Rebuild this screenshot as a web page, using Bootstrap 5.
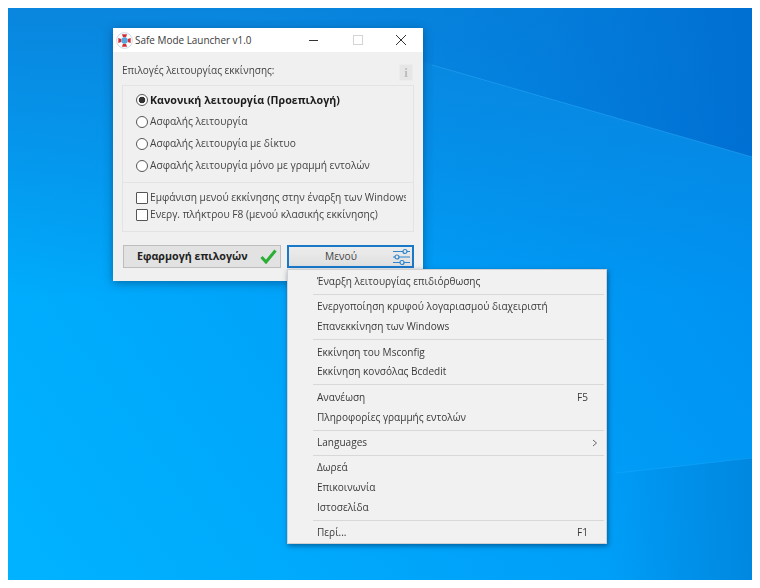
<!DOCTYPE html>
<html lang="el">
<head>
<meta charset="utf-8">
<title>Safe Mode Launcher</title>
<link href="https://cdn.jsdelivr.net/npm/bootstrap@5.3.0/dist/css/bootstrap.min.css" rel="stylesheet">
<style>
html,body{height:100%;background:#fff;margin:0}
body{font-family:"Open Sans","Noto Sans","Liberation Sans",sans-serif;font-size:10px;color:#333;overflow:hidden}
.desk{position:relative;margin:8px 8px 0;width:744px;height:572px;overflow:hidden;background:#0098f4}
.desk svg.wall{position:absolute;inset:0;width:100%;height:100%}
.appwin{position:absolute;left:105px;top:20px;width:310px;height:253px;background:#f0f0f0;box-shadow:0 2px 9px rgba(0,40,80,.45);filter:blur(.3px)}
.tbar{height:24px;background:#fff;color:#3a3a3a;font-size:9.95px;padding-left:3px}
.tbar .ttl{margin-left:2px}
.wbtns{margin-left:auto;width:115px;padding-right:16px}
.appbody{padding:10px 9px 0 9px}
.lbl-top{height:24px;color:#444;line-height:16px}
.infobtn{width:14px;height:17px;background:#e6e6e6;border:1px solid #ececec;color:#bbb;font:bold 13px "Liberation Serif",serif;line-height:15px;text-align:center;margin-top:2px;margin-right:1px}
.optbox{border:1px solid #e3e3e3;margin-top:-1px;height:147px;width:292px}
.optgrp{padding:3px 0 0 13px;height:97px;border-bottom:1px solid #e3e3e3}
.optgrp2{padding:6px 0 0 13px}
.optrow{height:22px;color:#444;white-space:nowrap;font-size:10.2px}
.optrow2{height:17px;color:#444;white-space:nowrap;overflow:hidden;width:270px;font-size:10.2px}
.optrow.on{color:#1c1c1c;font-weight:700;font-size:10.7px}
.optrow .form-check-input,.optrow2 .form-check-input{width:12px;height:12px;margin:0 2px 0 0;flex:none;background-color:#fff;border:1px solid #555;box-shadow:none}
.optrow2 .form-check-input{border-radius:1px}
.optrow .form-check-input:checked{background-color:#fff;border-color:#555;background-image:radial-gradient(circle,#333 0 3px,transparent 3.6px)}
.actrow{margin-top:13px;gap:6px;padding-left:1px}
.apbtn,.mnbtn{height:23px;border-radius:0;font-size:10.2px;padding:0}
.apbtn{width:158px;background:#e2e2e2;border:1px solid #bdbdbd;color:#222;font-weight:700;padding-left:13px;font-size:10.7px;gap:12px}
.mnbtn{width:127px;background:linear-gradient(#ececec,#e0e0e0);border:2px solid #1a78c8;color:#444;padding:0 1px 0 36px}
.apbtn:hover,.mnbtn:hover{background:#e2e2e2;color:#222}
.popmenu{position:absolute;left:279px;top:261px;width:320px;height:275px;background:#f1f1f1;border:1px solid #d0d0d0;box-shadow:1px 2px 5px rgba(0,30,70,.5);padding:2px 2px 2px 25px;margin:0;filter:blur(.3px)}
.popitem{height:19.8px;line-height:19.8px;padding-left:4px;padding-right:16px;color:#3a3a3a;font-size:10.05px}
.popsep{height:5.6px;display:flex;align-items:center}
.popsep::before{content:"";display:block;width:100%;height:1px;background:#d8d8d8}
.chevr{margin-right:-10px}
</style>
</head>
<body>
<div class="desk">
<svg class="wall" viewBox="0 0 744 572" preserveAspectRatio="none" aria-hidden="true">
<defs>
<linearGradient id="b0" x1="0" y1="0.9" x2="1" y2="0.35"><stop offset="0" stop-color="#00b2ff"/><stop offset=".55" stop-color="#00a0f8"/><stop offset="1" stop-color="#0090f0"/></linearGradient>
<linearGradient id="t0" x1="0" y1="0" x2="0" y2="1"><stop offset="0" stop-color="#0a84dc" stop-opacity=".95"/><stop offset="1" stop-color="#0a84dc" stop-opacity="0"/></linearGradient>
<linearGradient id="w1" x1="0" y1="0" x2="1" y2="0"><stop offset="0" stop-color="#0080de" stop-opacity="0"/><stop offset="1" stop-color="#006ed2" stop-opacity=".95"/></linearGradient>
<linearGradient id="w2" x1="0" y1="0" x2="1" y2="0"><stop offset="0" stop-color="#0086de" stop-opacity="0"/><stop offset="1" stop-color="#0086de" stop-opacity=".9"/></linearGradient>
</defs>
<rect width="744" height="572" fill="url(#b0)"/>
<rect width="744" height="290" fill="url(#t0)"/>
<polygon points="240,0 744,0 744,149 424,57" fill="url(#w1)"/>
<line x1="424" y1="57" x2="744" y2="149" stroke="#2aa6f6" stroke-opacity=".55"/>
<polygon points="600,467 744,450 744,572 600,572" fill="url(#w2)"/>
<line x1="608" y1="465" x2="744" y2="450" stroke="#28b0fb" stroke-opacity=".3"/>
</svg>

<div class="appwin">
 <div class="tbar d-flex align-items-center">
  <svg width="17" height="17" viewBox="0 0 16 16" aria-hidden="true"><circle cx="8" cy="8" r="5.6" fill="none" stroke="#fff" stroke-width="3.6"/><circle cx="8" cy="8" r="7.4" fill="none" stroke="#9fb4c8" stroke-width=".5"/><path d="M5.6 2.2 L10.4 2.2 L9.4 5 L6.6 5Z M5.6 13.8 L10.4 13.8 L9.4 11 L6.6 11Z M2.2 5.6 L2.2 10.4 L5 9.4 L5 6.6Z M13.8 5.6 L13.8 10.4 L11 9.4 L11 6.6Z" fill="#cf2f35"/><circle cx="8" cy="8" r="3" fill="#5aa7e0"/></svg>
  <span class="ttl">Safe Mode Launcher v1.0</span>
  <div class="wbtns d-flex align-items-center justify-content-between">
   <svg width="12" height="12" viewBox="0 0 12 12" aria-hidden="true"><path d="M1 6.5H10" stroke="#333" stroke-width="1"/></svg>
   <svg width="10" height="10" viewBox="0 0 10 10" aria-hidden="true"><rect x=".5" y=".5" width="9" height="9" fill="none" stroke="#d4d4d4"/></svg>
   <svg width="12" height="12" viewBox="0 0 12 12" aria-hidden="true"><path d="M1 1L11 11M11 1L1 11" stroke="#333" stroke-width="1"/></svg>
  </div>
 </div>
 <div class="appbody">
  <div class="lbl-top d-flex justify-content-between align-items-start"><span>Επιλογές λειτουργίας εκκίνησης:</span><span class="infobtn">i</span></div>
  <div class="optbox">
   <div class="optgrp">
    <label class="optrow on d-flex align-items-center"><input class="form-check-input" type="radio" name="m" checked>Κανονική λειτουργία (Προεπιλογή)</label>
    <label class="optrow d-flex align-items-center"><input class="form-check-input" type="radio" name="m">Ασφαλής λειτουργία</label>
    <label class="optrow d-flex align-items-center"><input class="form-check-input" type="radio" name="m">Ασφαλής λειτουργία με δίκτυο</label>
    <label class="optrow d-flex align-items-center"><input class="form-check-input" type="radio" name="m">Ασφαλής λειτουργία μόνο με γραμμή εντολών</label>
   </div>
   <div class="optgrp2">
    <label class="optrow2 d-flex align-items-center"><input class="form-check-input" type="checkbox">Εμφάνιση μενού εκκίνησης στην έναρξη των Windows</label>
    <label class="optrow2 d-flex align-items-center"><input class="form-check-input" type="checkbox">Ενεργ. πλήκτρου F8 (μενού κλασικής εκκίνησης)</label>
   </div>
  </div>
  <div class="actrow d-flex">
   <button class="btn apbtn d-flex align-items-center" type="button">Εφαρμογή επιλογών
    <svg width="17" height="15" viewBox="0 0 17 15" aria-hidden="true"><path d="M1.5 8L6 13L15.5 1.5" fill="none" stroke="#2cae34" stroke-width="3"/></svg></button>
   <button class="btn mnbtn d-flex align-items-center justify-content-between" type="button">Μενού
    <svg width="19" height="18" viewBox="0 0 19 18" aria-hidden="true"><g stroke="#2f86cc" stroke-width="1.2" fill="#e8e8e8"><path d="M1 3.5H18M1 9H18M1 14.5H18"/><circle cx="13" cy="3.5" r="2"/><circle cx="5" cy="9" r="2"/><circle cx="10" cy="14.5" r="2"/></g></svg></button>
  </div>
 </div>
</div>

<ul class="popmenu list-unstyled">
 <li class="popitem">Έναρξη λειτουργίας επιδιόρθωσης</li>
 <li class="popsep"></li>
 <li class="popitem">Ενεργοποίηση κρυφού λογαριασμού διαχειριστή</li>
 <li class="popitem">Επανεκκίνηση των Windows</li>
 <li class="popsep"></li>
 <li class="popitem">Εκκίνηση του Msconfig</li>
 <li class="popitem">Εκκίνηση κονσόλας Bcdedit</li>
 <li class="popsep"></li>
 <li class="popitem d-flex justify-content-between"><span>Ανανέωση</span><span>F5</span></li>
 <li class="popitem">Πληροφορίες γραμμής εντολών</li>
 <li class="popsep"></li>
 <li class="popitem d-flex justify-content-between align-items-center"><span>Languages</span><svg class="chevr" width="6" height="8" viewBox="0 0 6 8" aria-hidden="true"><path d="M1 1L4.5 4L1 7" fill="none" stroke="#666"/></svg></li>
 <li class="popsep"></li>
 <li class="popitem">Δωρεά</li>
 <li class="popitem">Επικοινωνία</li>
 <li class="popitem">Ιστοσελίδα</li>
 <li class="popsep"></li>
 <li class="popitem d-flex justify-content-between"><span>Περί...</span><span>F1</span></li>
</ul>
</div>
</body>
</html>
